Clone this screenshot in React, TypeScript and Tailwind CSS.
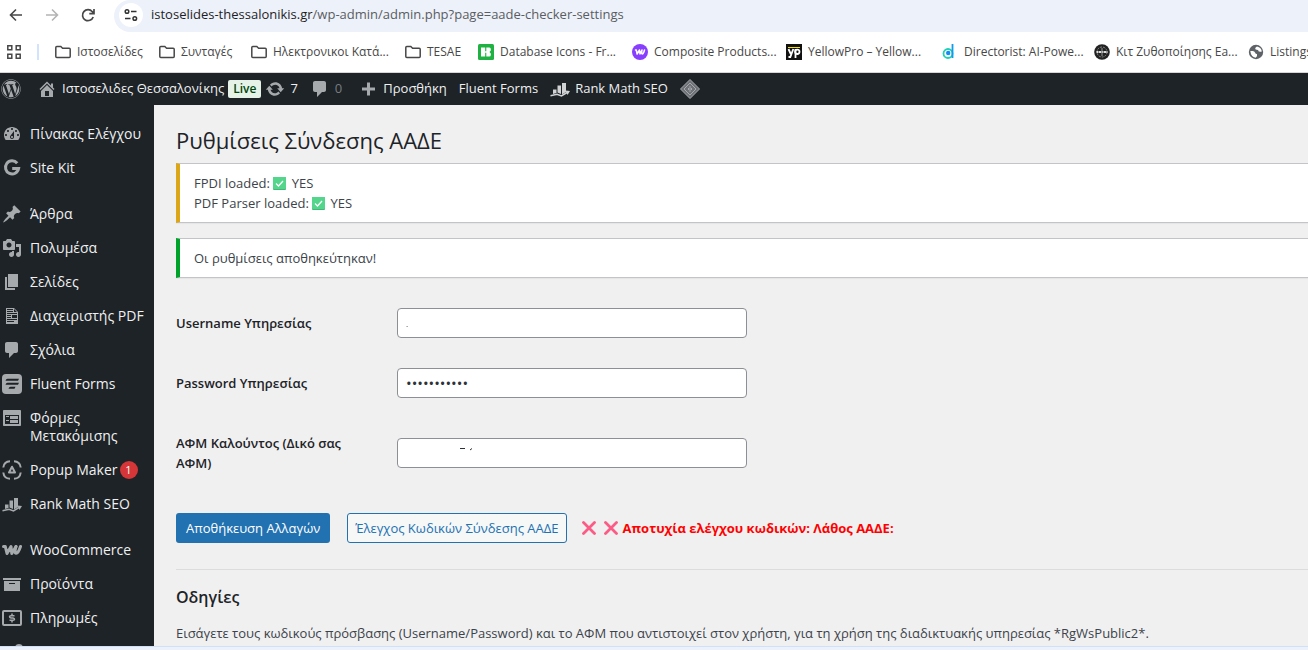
import type { ReactNode } from "react";
import { FaWordpress } from "react-icons/fa";

const paths = {
  dashboard:
    "M3.76 16h12.48c1.1-1.37 1.76-3.11 1.76-5 0-4.42-3.58-8-8-8s-8 3.58-8 8c0 1.89.66 3.63 1.76 5zM10 4c.55 0 1 .45 1 1s-.45 1-1 1-1-.45-1-1 .45-1 1-1zM6 6c.55 0 1 .45 1 1s-.45 1-1 1-1-.45-1-1 .45-1 1-1zm8 0c.55 0 1 .45 1 1s-.45 1-1 1-1-.45-1-1 .45-1 1-1zm-5.37 5.55L12 7v6c0 1.1-.9 2-2 2s-2-.9-2-2c0-.57.24-1.08.63-1.45zM4 10c.55 0 1 .45 1 1s-.45 1-1 1-1-.45-1-1 .45-1 1-1zm12 0c.55 0 1 .45 1 1s-.45 1-1 1-1-.45-1-1 .45-1 1-1zm-5 3c0-.55-.45-1-1-1s-1 .45-1 1 .45 1 1 1 1-.45 1-1z",
  post: "M10.44 3.02l1.82-1.82 6.36 6.35-1.83 1.82c-1.05-.68-2.48-.57-3.41.36l-.75.75c-.92.93-1.04 2.35-.35 3.41l-1.83 1.82-2.41-2.41-2.8 2.79c-.42.42-3.38 2.71-3.8 2.29s1.86-3.39 2.28-3.81l2.79-2.79L4.1 9.36l1.83-1.82c1.05.69 2.48.57 3.4-.36l.75-.75c.93-.92 1.05-2.35.36-3.41z",
  media:
    "M13 11V4c0-.55-.45-1-1-1h-1.67L9 1H5L3.67 3H2c-.55 0-1 .45-1 1v7c0 .55.45 1 1 1h10c.55 0 1-.45 1-1zM7 4.5c1.38 0 2.5 1.12 2.5 2.5S8.38 9.5 7 9.5 4.5 8.38 4.5 7 5.62 4.5 7 4.5zM14 6h5v10.5c0 1.38-1.12 2.5-2.5 2.5S14 17.88 14 16.5s1.12-2.5 2.5-2.5c.17 0 .34.02.5.05V9h-3V6zm-4 8.05V13h2v3.5c0 1.38-1.12 2.5-2.5 2.5S7 17.88 7 16.5 8.12 14 9.5 14c.17 0 .34.02.5.05z",
  page: "M6 15V2h10v13H6zm-1 1h8v2H3V5h2v11z",
  document:
    "M12 2l4 4v12H4V2h8zM5 3v1h6V3H5zm7 3h3l-3-3v3zM5 5v1h6V5H5zm10 3V7H5v1h10zM5 9v1h4V9H5zm10 3V9h-5v3h5zM5 11v1h4v-1H5zm10 3v-1H5v1h10zm-3 2v-1H5v1h7z",
  comments: "M5 2h9c1.1 0 2 .9 2 2v7c0 1.1-.9 2-2 2h-2l-5 5v-5H5c-1.1 0-2-.9-2-2V4c0-1.1.9-2 2-2z",
  home: "M16 8.5l1.53 1.53-1.06 1.06L10 4.6l-6.47 6.49-1.06-1.06L10 2.5l4 4v-2h2v4zm-6-2.46l6 5.99V18H4v-5.97zM12 17v-5H8v5h4z",
  update:
    "M10.2 3.28c3.53 0 6.43 2.61 6.92 6h2.08l-3.5 4-3.5-4h2.32c-.45-1.97-2.21-3.45-4.32-3.45-1.45 0-2.73.71-3.54 1.78L4.95 5.66C6.23 4.2 8.11 3.28 10.2 3.28zm-.4 13.44c-3.52 0-6.43-2.61-6.92-6H.8l3.5-4c1.17 1.33 2.33 2.67 3.5 4H5.48c.45 1.97 2.21 3.45 4.32 3.45 1.45 0 2.73-.71 3.54-1.78l1.71 1.95c-1.28 1.46-3.15 2.38-5.25 2.38z",
  plus: "M17 8.5v3h-5v5H9v-5H4v-3h5v-5h3v5h5z",
  feedback:
    "M2 2h16c.55 0 1 .45 1 1v14c0 .55-.45 1-1 1H2c-.55 0-1-.45-1-1V3c0-.55.45-1 1-1zm15 14V7H3v9h14zM4 8v1h3V8H4zm4 0v3h8V8H8zm-4 4v1h3v-1H4zm4 0v3h8v-3H8z",
  archive: "M19 4v2H1V4h18zM2 7h16v10H2V7zm11 3V9H7v1h6z",
};

function Dashicon({ name }: { name: keyof typeof paths }) {
  return (
    <svg viewBox="0 0 20 20" className="size-5 shrink-0" fill="currentColor" fillRule="evenodd" aria-hidden="true">
      <path d={paths[name]} />
    </svg>
  );
}

function SiteKitIcon() {
  return (
    <svg viewBox="0 0 20 20" className="size-5 shrink-0" fill="none" stroke="currentColor" strokeWidth="3" aria-hidden="true">
      <path d="M15.2 5.2A6.6 6.6 0 1 0 16.6 10.6H10.2" />
    </svg>
  );
}

function FluentIcon() {
  return (
    <svg viewBox="0 0 20 20" className="size-5 shrink-0" aria-hidden="true">
      <rect width="20" height="20" rx="4" fill="currentColor" />
      <path d="M5.5 4.800H17l-1 2H3.500q.5-2 2-2zM5.500 8.800H17l-1 2H3.500q.5-2 2-2zM8.500 12.800H13.500l-1 2H6.500q.5-2 2-2z" fill="#1d2327" />
    </svg>
  );
}

function PopupIcon() {
  return (
    <svg viewBox="0 0 20 20" className="size-5 shrink-0" fill="none" stroke="currentColor" strokeWidth="2" aria-hidden="true">
      <path d="M8 1.300Q2 1.500 1.300 7.500M12 1.300Q18 1.500 18.700 7.500M1.300 12.500Q2 18.500 8 18.700M18.700 12.500Q18 18.500 12 18.700" />
      <path d="M10 6.700l3 5.800H7z" strokeLinejoin="round" />
    </svg>
  );
}

function RankMathIcon() {
  return (
    <svg viewBox="0 0 20 20" className="size-5 shrink-0" fill="currentColor" aria-hidden="true">
      <path d="M3 10.500h3.500v3.500L3 15zM7.500 6.500H11v8.500L7.500 13.500zM12 4h4v9l-4 2.500z" />
      <path d="M.5 16.800l6.500-1.500 4.500 1.700 5.500-3.500" fill="none" stroke="currentColor" strokeWidth="1.500" />
      <path d="M15.500 11.500l4.500.5-2.500 4z" />
    </svg>
  );
}

function WooIcon() {
  return (
    <svg viewBox="0 0 20 20" className="size-5 shrink-0" fill="none" stroke="currentColor" strokeWidth="3" strokeLinejoin="round" strokeLinecap="round" aria-hidden="true">
      <path d="M1.500 6.500h1.800l1.700 7 4-7 .8 7L14 6.500" />
      <path d="M14 6.500q-1.800 6.500 0 6.800Q16.500 13 18.500 6.500" />
    </svg>
  );
}

function PaymentsIcon() {
  return (
    <svg viewBox="0 0 20 20" className="size-5 shrink-0" fill="none" stroke="currentColor" strokeWidth="2" aria-hidden="true">
      <rect x="1" y="3" width="18" height="14" rx="1" />
      <path d="M12.500 7.800H9q-1.500 0-1.500 1t1.500 1.200h2q1.500.2 1.500 1.200t-1.500 1.100H7.500M10 5.500v2M10 12.500v2" strokeWidth="1.500" />
    </svg>
  );
}

type MenuEntry = { label: ReactNode; icon: ReactNode; gap?: boolean; badge?: string };

const menu: MenuEntry[] = [
  { label: "Πίνακας Ελέγχου", icon: <Dashicon name="dashboard" /> },
  { label: "Site Kit", icon: <SiteKitIcon /> },
  { label: "Άρθρα", icon: <Dashicon name="post" />, gap: true },
  { label: "Πολυμέσα", icon: <Dashicon name="media" /> },
  { label: "Σελίδες", icon: <Dashicon name="page" /> },
  { label: "Διαχειριστής PDF", icon: <Dashicon name="document" /> },
  { label: "Σχόλια", icon: <Dashicon name="comments" /> },
  { label: "Fluent Forms", icon: <FluentIcon /> },
  { label: <>Φόρμες<br />Μετακόμισης</>, icon: <Dashicon name="feedback" /> },
  { label: "Popup Maker", icon: <PopupIcon />, badge: "1" },
  { label: "Rank Math SEO", icon: <RankMathIcon /> },
  { label: "WooCommerce", icon: <WooIcon />, gap: true },
  { label: "Προϊόντα", icon: <Dashicon name="archive" /> },
  { label: "Πληρωμές", icon: <PaymentsIcon /> },
];

function FolderIcon() {
  return (
    <svg viewBox="0 0 16 16" className="size-4 shrink-0" fill="none" stroke="#474747" strokeWidth="1.500" aria-hidden="true">
      <path d="M.8 3.500q0-1 1-1h4l1.800 1.800h6.600q1 0 1 1v7.200q0 1-1 1H1.800q-1 0-1-1z" />
    </svg>
  );
}

const bookmarks: { label: string; icon: ReactNode; width: string }[] = [
  { label: "Ιστοσελίδες", icon: <FolderIcon />, width: "w-[104px]" },
  { label: "Συνταγές", icon: <FolderIcon />, width: "w-[92px]" },
  { label: "Ηλεκτρονικοι Κατά...", icon: <FolderIcon />, width: "w-[154px]" },
  { label: "TESAE", icon: <FolderIcon />, width: "w-[73px]" },
  {
    label: "Database Icons - Fr...",
    width: "w-[154px]",
    icon: (
      <svg viewBox="0 0 16 16" className="size-4 shrink-0" aria-hidden="true">
        <rect width="16" height="16" rx="1.500" fill="#1fb141" />
        <path d="M3 3.500h4.200v9H3zM8.300 3.500h3q1.500 0 1.500 1.500v1.500L11.500 8l1.300 1.500V11q0 1.500-1.500 1.500h-3zM7 7.300h2v1.400H7z" fill="#fff" />
      </svg>
    ),
  },
  {
    label: "Composite Products...",
    width: "w-[154px]",
    icon: (
      <svg viewBox="0 0 16 16" className="size-4 shrink-0" aria-hidden="true">
        <circle cx="8" cy="8" r="8" fill="#873eff" />
        <path d="M3.500 6h.8l.8 4 2.400-4 .5 4 2-4q-.8 3.800.3 3.900 1.200 0 2.200-3.900" fill="none" stroke="#fff" strokeWidth="1.500" strokeLinejoin="round" strokeLinecap="round" />
      </svg>
    ),
  },
  {
    label: "YellowPro – Yellow...",
    width: "w-[156px]",
    icon: (
      <svg viewBox="0 0 16 16" className="size-4 shrink-0" fill="none" stroke="#fff" strokeWidth="1.800" aria-hidden="true">
        <rect width="16" height="16" fill="#111" stroke="none" />
        <path d="M2.500 5l2.300 5M7.300 5l-3 8H2.500M9.500 14V5" />
        <circle cx="11.300" cy="7.800" r="2.200" />
        <path d="M2 3.500h12" stroke="#f5e000" strokeWidth="1" />
      </svg>
    ),
  },
  {
    label: "Directorist: AI-Powe...",
    width: "w-[152px]",
    icon: (
      <svg viewBox="0 0 16 16" className="size-4 shrink-0" fill="none" aria-hidden="true">
        <circle cx="6" cy="9.500" r="4.500" stroke="#1fd0b4" strokeWidth="1.800" />
        <path d="M10.500 0v14" stroke="#0f9bf0" strokeWidth="1.800" />
        <circle cx="6.200" cy="9" r="2.200" fill="#1689f5" />
      </svg>
    ),
  },
  {
    label: "Κιτ Ζυθοποίησης Ea...",
    width: "w-[154px]",
    icon: (
      <svg viewBox="0 0 16 16" className="size-4 shrink-0" fill="none" aria-hidden="true">
        <circle cx="8" cy="8" r="7.800" fill="#222" />
        <circle cx="8" cy="8" r="5" stroke="#888" strokeWidth="1" strokeDasharray="2 1" />
        <path d="M2.500 8h11" stroke="#ddd" strokeWidth="2" strokeDasharray="2 .5" />
        <path d="M8 4v8" stroke="#999" strokeWidth="1" />
      </svg>
    ),
  },
  {
    label: "Listings",
    width: "w-[154px]",
    icon: (
      <svg viewBox="0 0 16 16" className="size-4 shrink-0" aria-hidden="true">
        <circle cx="8" cy="8" r="7.200" fill="#5f6368" />
        <path d="M2.300 7h2.500q1.700 0 2.200 1.500t2 1.500v2.200q-1 .8-1.300 1.600Q3 13 2.300 7zM9 2.500q-1.800.8-1.800 2T9 5.800t1.500 1.400q.8.800 3.300.3Q13.500 3.500 9 2.500z" fill="#fff" />
      </svg>
    ),
  },
];

function CheckMark() {
  return (
    <svg viewBox="0 0 13 13" className="mr-[2px] inline-block size-[13px] align-[-2px]" role="img" aria-label="check">
      <rect width="13" height="13" rx="1" fill="#3fb878" />
      <rect width="13" height="12" rx="1" fill="#53d68c" />
      <path d="M3 6.500l2.500 2.500L10 4" fill="none" stroke="#fff" strokeWidth="1.300" />
    </svg>
  );
}

function Cross() {
  return (
    <svg viewBox="0 0 14 14" className="size-[14px] shrink-0" aria-hidden="true">
      <path d="M1.500 1.500l11 11M12.500 1.500l-11 11" stroke="#fb5c85" strokeWidth="2.800" strokeLinecap="round" />
    </svg>
  );
}

function BrowserBar() {
  return (
    <header className="shrink-0 bg-white">
      <div className="flex h-8 items-start">
        <div className="flex h-[30px] shrink-0 items-center gap-5 pl-2 text-[#474747]">
          <button aria-label="Back" className="size-4">
            <svg viewBox="0 0 16 16" fill="none" stroke="currentColor" strokeWidth="1.600"><path d="M14 8H3M8 2.500L2.500 8 8 13.500" /></svg>
          </button>
          <button aria-label="Forward" className="size-4 text-[#b4b4b4]">
            <svg viewBox="0 0 16 16" fill="none" stroke="currentColor" strokeWidth="1.600"><path d="M2 8h11M8 2.500L13.500 8 8 13.500" /></svg>
          </button>
          <button aria-label="Reload" className="size-4">
            <svg viewBox="0 0 16 16" fill="none" stroke="currentColor" strokeWidth="1.700"><path d="M13.200 10A5.500 5.500 0 1 1 12.300 4.700L14 6.500M14 2v4.700H9.300" /></svg>
          </button>
        </div>
        <div className="ml-[18px] flex h-8 min-w-0 flex-1 items-start rounded-l-2xl bg-[#edf1fa] pl-[5px]">
          <div className="flex h-[30px] items-center">
            <button aria-label="Site information" className="grid size-6 place-items-center rounded-full bg-white">
              <svg viewBox="0 0 14 14" className="size-[14px]" fill="none" stroke="#333" strokeWidth="1.500">
                <circle cx="3" cy="3.500" r="1.800" /><path d="M7 3.500h5.500M1 10.500h5.500" /><circle cx="10.800" cy="10.500" r="1.800" />
              </svg>
            </button>
            <p className="ml-2 text-[13px] whitespace-nowrap text-[#5a5d61]">
              <span className="text-[#1f1f1f]">istoselides-thessalonikis.gr</span>/wp-admin/admin.php?page=aade-checker-settings
            </p>
          </div>
        </div>
      </div>
      <nav className="flex h-10 items-center overflow-hidden pl-[7px] text-xs text-[#474747]">
        <button aria-label="Apps" className="shrink-0">
          <svg viewBox="0 0 14 14" className="size-[14px]" fill="none" stroke="#474747" strokeWidth="1.500">
            <path d="M.8.8h4v4h-4zM9.200.8h4v4h-4zM.8 9.200h4v4h-4zM9.200 9.200h4v4h-4z" />
          </svg>
        </button>
        <span className="mx-4 h-4 w-[2px] shrink-0 bg-[#d3e3fd]" />
        {bookmarks.map((b) => (
          <a key={b.label} href="#" className={`flex shrink-0 items-center gap-[6px] whitespace-nowrap ${b.width}`}>
            {b.icon}
            {b.label}
          </a>
        ))}
      </nav>
    </header>
  );
}

function AdminBar() {
  return (
    <nav className="flex h-[33px] shrink-0 items-center overflow-hidden border-t border-[#d6d6d6] bg-[#1d2327] text-[13px] whitespace-nowrap text-[#f0f0f1]">
      <a href="#" aria-label="WordPress" className="ml-px text-[#a7aaad]"><FaWordpress size={20} /></a>
      <a href="#" className="ml-4 flex items-center gap-[5px]">
        <span className="text-[#a7aaad]"><Dashicon name="home" /></span>
        Ιστοσελιδες Θεσσαλονίκης
      </a>
      <span className="ml-1 rounded-[2px] bg-[#e6f2e8] px-[5px] text-xs leading-[18px] font-semibold text-[#00450c]">Live</span>
      <a href="#" className="ml-1 flex items-center gap-[5px]"><span className="text-[#a7aaad]"><Dashicon name="update" /></span>7</a>
      <a href="#" className="ml-3 flex items-center gap-[5px] text-[#a7aaad]">
        <Dashicon name="comments" />
        <span className="text-[#787c82]">0</span>
      </a>
      <a href="#" className="ml-4 flex items-center gap-[5px]"><span className="text-[#a7aaad]"><Dashicon name="plus" /></span>Προσθήκη</a>
      <a href="#" className="ml-3">Fluent Forms</a>
      <a href="#" className="ml-3 flex items-center gap-[5px]"><span className="text-[#d0d2d4]"><RankMathIcon /></span>Rank Math SEO</a>
      <a href="#" aria-label="Status" className="ml-3">
        <svg viewBox="0 0 20 20" className="size-5" fill="none" stroke="#a7aaad" aria-hidden="true">
          <path d="M10 .5L19.500 10 10 19.500.5 10z" fill="#6f7378" />
          <path d="M10 4l6 6-6 6-6-6z" />
          <path d="M10 7v6M8.500 9v2M11.500 9v2" />
        </svg>
      </a>
    </nav>
  );
}

function Sidebar() {
  return (
    <aside className="w-[154px] shrink-0 overflow-hidden bg-[#1d2327] pt-3 text-sm leading-[18px] text-[#f0f0f1]">
      <ul>
        {menu.map((item, i) => (
          <li key={i} className={item.gap ? "mt-3" : ""}>
            <a href="#" className="flex items-start gap-2 py-2 pl-[2px] whitespace-nowrap">
              <span className="-my-px text-[#a7aaad]">{item.icon}</span>
              <span>{item.label}</span>
              {item.badge && (
                <span className="-ml-1.5 size-[18px] shrink-0 rounded-full bg-[#d63638] text-center text-[11px] text-white">{item.badge}</span>
              )}
            </a>
          </li>
        ))}
        {/* next entry starts right at the fold */}
        <li className="pt-[9px] pl-[15px]">
          <span className="block size-2 rounded-full bg-[#a7aaad]" />
        </li>
      </ul>
    </aside>
  );
}

const fieldClass = "h-[30px] w-[350px] rounded-[4px] border border-[#8c8f94] bg-white px-2 text-[#2c3338]";
const noticeClass = "border-y border-l-4 border-y-[#c3c4c7] bg-white py-[9px] pl-[14px] shadow-[0_1px_1px_rgba(0,0,0,0.04)]";

function Settings() {
  return (
    <main className="min-w-0 flex-1 overflow-hidden bg-[#f0f0f1] pt-[18px] pl-[22px] text-[13px] leading-5 text-[#3c434a]">
      <h1 className="pt-1 text-[22px] leading-[26px] text-[#1d2327]">Ρυθμίσεις Σύνδεσης ΑΑΔΕ</h1>
      <div className={`mt-[10px] border-l-[#dba617] ${noticeClass}`}>
        <p>FPDI loaded: <CheckMark /> YES</p>
        <p>PDF Parser loaded: <CheckMark /> YES</p>
      </div>
      <div className={`mt-[15px] border-l-[#00a32a] ${noticeClass}`}>
        <p>Οι ρυθμίσεις αποθηκεύτηκαν!</p>
      </div>

      <form className="mt-[30px]" onSubmit={(e) => e.preventDefault()}>
        <div className="grid grid-cols-[200px_1fr] items-center gap-x-[21px] gap-y-[30px]">
          <label htmlFor="username" className="font-semibold text-[#1d2327]">Username Υπηρεσίας</label>
          <input id="username" defaultValue="." className={`${fieldClass} text-[8px]`} />
          <label htmlFor="password" className="font-semibold text-[#1d2327]">Password Υπηρεσίας</label>
          <input id="password" type="password" defaultValue="settings123" className={`${fieldClass} text-[15px]`} />
          <label htmlFor="afm" className="mt-[5px] w-[180px] font-semibold text-[#1d2327]">ΑΦΜ Καλούντος (Δικό σας ΑΦΜ)</label>
          <div className="relative mt-[5px] flex">
            <input id="afm" className={fieldClass} />
            <svg viewBox="0 0 14 4" className="absolute top-[9px] left-[62px] h-1 w-[14px]" aria-hidden="true">
              <path d="M1 1.500h5M11 3l2-1.500" stroke="#2c3338" fill="none" />
            </svg>
          </div>
        </div>
        <div className="mt-10 flex items-center">
          <button type="submit" className="h-[30px] rounded-[3px] bg-[#2271b1] px-[10px] whitespace-nowrap text-white">Αποθήκευση Αλλαγών</button>
          <button type="button" className="ml-[17px] h-[30px] rounded-[3px] border border-[#2271b1] bg-[#f6f7f7] px-[7px] whitespace-nowrap text-[#2271b1]">
            Έλεγχος Κωδικών Σύνδεσης ΑΑΔΕ
          </button>
          <p className="ml-[15px] flex items-center gap-2 font-bold whitespace-nowrap text-[#f00]">
            <Cross />
            <Cross />
            <span className="-ml-[3px]">Αποτυχία ελέγχου κωδικών: Λάθος ΑΑΔΕ:</span>
          </p>
        </div>
      </form>

      <hr className="mt-[26px] border-[#dcdcde]" />
      <h2 className="mt-[17px] text-base leading-5 font-semibold text-[#1d2327]">Οδηγίες</h2>
      <p className="mt-4 whitespace-nowrap">
        Εισάγετε τους κωδικούς πρόσβασης (Username/Password) και το ΑΦΜ που αντιστοιχεί στον χρήστη, για τη χρήση της διαδικτυακής υπηρεσίας *RgWsPublic2*.
      </p>
    </main>
  );
}

export default function App() {
  return (
    <div className="flex h-screen flex-col overflow-hidden font-['Open_Sans','Noto_Sans',sans-serif]">
      <BrowserBar />
      <AdminBar />
      <div className="flex min-h-0 flex-1">
        <Sidebar />
        <Settings />
      </div>
      <footer className="h-1 shrink-0 border-t border-[#cfe0fc] bg-[#edf1fa]" />
    </div>
  );
}
